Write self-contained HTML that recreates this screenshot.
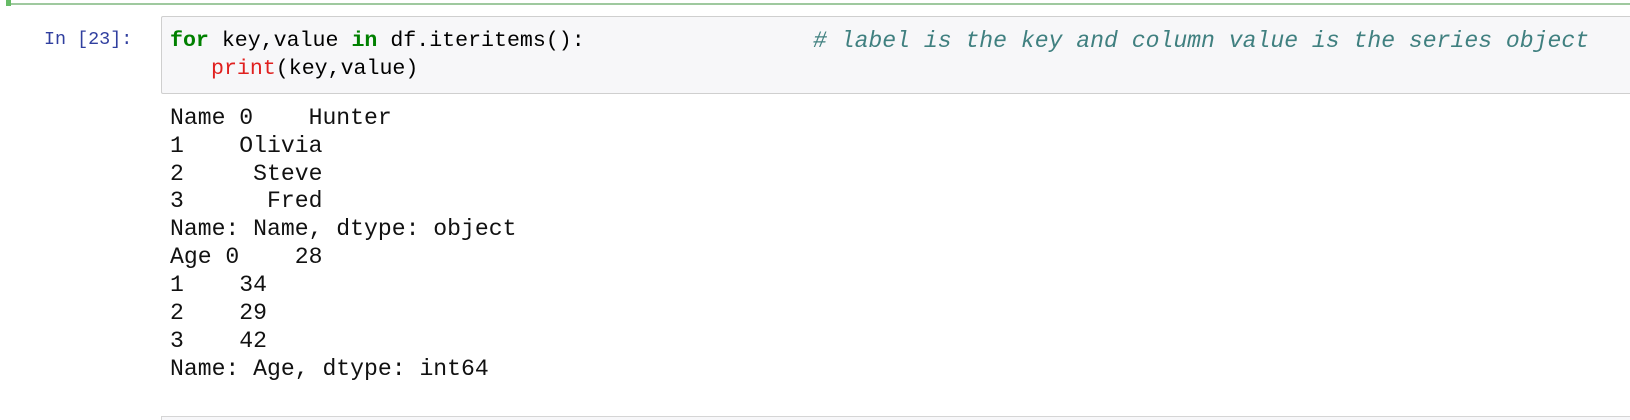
<!DOCTYPE html>
<html style="overflow:hidden;height:420px"><head><meta charset="utf-8"><style>
body{margin:0;width:1630px;height:420px;background:#fff;position:relative;overflow:hidden;font-family:"Liberation Mono",monospace;}
.a{position:absolute;white-space:pre;line-height:1;}
.c{font-size:21.6px;color:#000;}
.o{font-size:23.1px;color:#111;}
.k{color:#008000;font-weight:bold;}
.p{color:#e0201f;}
.cm{color:#408080;font-style:italic;font-size:23.1px;}
</style></head><body>
<div style="position:absolute;left:8px;top:3px;width:1622px;height:2px;background:#9fc99f"></div>
<div style="position:absolute;left:6px;top:0;width:5px;height:6px;background:#66bb66"></div>
<div style="position:absolute;left:161px;top:16px;width:1469px;height:76px;background:#f7f7f9;border:1px solid #cfcfcf;border-right:none;border-radius:2px 0 0 2px"></div>
<div class="a" style="left:44px;top:31px;font-size:18.4px;color:#303f9f">In [23]:</div>
<div class="a c" style="left:170px;top:31px"><span class="k">for</span> key,value <span class="k">in</span> df.iteritems():</div>
<div class="a cm" style="left:813px;top:30px"># label is the key and column value is the series object</div>
<div class="a c" style="left:211px;top:59px"><span class="p">print</span>(key,value)</div>
<div class="a o" style="left:170px;top:107px">Name 0    Hunter</div>
<div class="a o" style="left:170px;top:135px">1    Olivia</div>
<div class="a o" style="left:170px;top:163px">2     Steve</div>
<div class="a o" style="left:170px;top:190px">3      Fred</div>
<div class="a o" style="left:170px;top:218px">Name: Name, dtype: object</div>
<div class="a o" style="left:170px;top:246px">Age 0    28</div>
<div class="a o" style="left:170px;top:274px">1    34</div>
<div class="a o" style="left:170px;top:302px">2    29</div>
<div class="a o" style="left:170px;top:330px">3    42</div>
<div class="a o" style="left:170px;top:358px">Name: Age, dtype: int64</div>
<div style="position:absolute;left:161px;top:416px;width:1469px;height:3px;background:#f7f7f9;border-top:1px solid #d5d5d5;border-left:1px solid #d5d5d5"></div>
</body></html>
